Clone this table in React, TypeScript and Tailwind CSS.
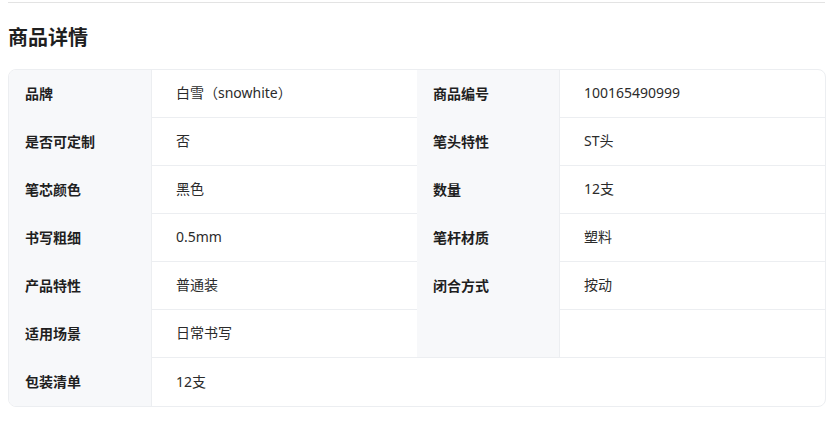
const rows: [string, string, string?, string?][] = [
  ["品牌", "白雪（snowhite）", "商品编号", "100165490999"],
  ["是否可定制", "否", "笔头特性", "ST头"],
  ["笔芯颜色", "黑色", "数量", "12支"],
  ["书写粗细", "0.5mm", "笔杆材质", "塑料"],
  ["产品特性", "普通装", "闭合方式", "按动"],
  ["适用场景", "日常书写", "", ""],
];

export default function App() {
  return (
    <div
      className="w-[833px] h-[429px] bg-white px-2 pt-[2px] text-[14px] text-[#2b2b2b]"
      style={{ fontFamily: '"Noto Sans", "Noto Sans CJK SC", sans-serif' }}
    >
      <div className="border-t border-[#e3e3e3]" />
      <h2 className="mt-[21px] text-[20px] leading-[28px] font-bold text-[#1f1f1f]">商品详情</h2>
      <div className="mt-[17px] w-[818px] overflow-hidden rounded-lg border border-[#eceef1]">
        <div className="grid grid-cols-[142px_266px_142px_266px]">
          {rows.map((r, i) => (
            <div key={i} className="contents">
              <div className="flex h-12 items-center bg-[#f7f8fa] pb-[2px] pl-4 font-bold text-[#1f1f1f]">{r[0]}</div>
              <div className="flex h-12 items-center border-b border-l border-[#eceef1] pb-[2px] pl-6">{r[1]}</div>
              <div
                className={
                  i === rows.length - 1
                    ? "flex h-12 items-center border-b border-[#eceef1] bg-[#f7f8fa] pb-[2px] pl-4 font-bold text-[#1f1f1f]"
                    : "flex h-12 items-center bg-[#f7f8fa] pb-[2px] pl-4 font-bold text-[#1f1f1f]"
                }
              >
                {r[2]}
              </div>
              <div className="flex h-12 items-center border-b border-l border-[#eceef1] pb-[2px] pl-6">{r[3]}</div>
            </div>
          ))}
          <div className="flex h-12 items-center bg-[#f7f8fa] pb-[2px] pl-4 font-bold text-[#1f1f1f]">包装清单</div>
          <div className="col-span-3 flex h-12 items-center border-l border-[#eceef1] pb-[2px] pl-6">12支</div>
        </div>
      </div>
    </div>
  );
}
